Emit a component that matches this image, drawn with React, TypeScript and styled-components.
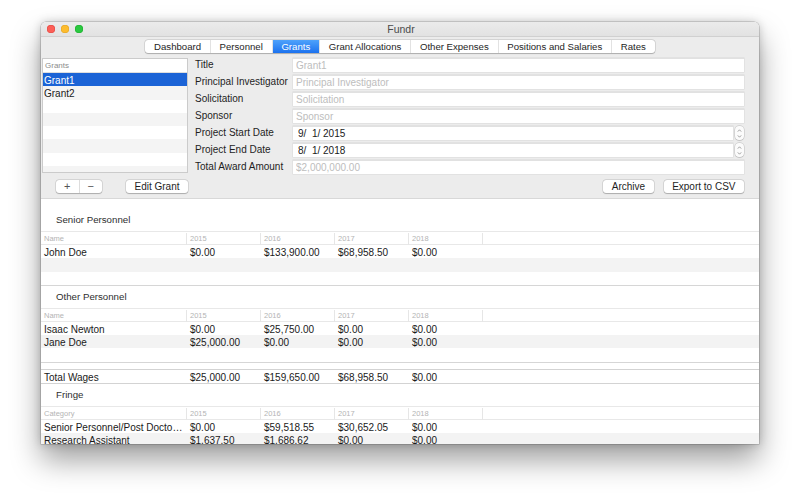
import styled, { createGlobalStyle } from 'styled-components';

// Глобальные стили страницы
const GlobalStyle = createGlobalStyle`
  html, body {
    margin: 0;
    padding: 0;
    background: #ffffff;
  }
  body {
    font-family: 'Liberation Sans', Arial, sans-serif;
  }
  * {
    box-sizing: border-box;
  }
`;

interface Field {
  label: string;
  placeholder?: string;
  value?: string;
  stepper?: boolean;
}

interface Line {
  name: string;
  values: string[];
}

const tabs = ['Dashboard', 'Personnel', 'Grants', 'Grant Allocations', 'Other Expenses', 'Positions and Salaries', 'Rates'];
const years = ['2015', '2016', '2017', '2018'];

const fields: Field[] = [
  { label: 'Title', placeholder: 'Grant1' },
  { label: 'Principal Investigator', placeholder: 'Principal Investigator' },
  { label: 'Solicitation', placeholder: 'Solicitation' },
  { label: 'Sponsor', placeholder: 'Sponsor' },
  { label: 'Project Start Date', value: '9/  1/ 2015', stepper: true },
  { label: 'Project End Date', value: '8/  1/ 2018', stepper: true },
  { label: 'Total Award Amount', placeholder: '$2,000,000.00' },
];

const senior: Line[] = [
  { name: 'John Doe', values: ['$0.00', '$133,900.00', '$68,958.50', '$0.00'] },
];
const other: Line[] = [
  { name: 'Isaac Newton', values: ['$0.00', '$25,750.00', '$0.00', '$0.00'] },
  { name: 'Jane Doe', values: ['$25,000.00', '$0.00', '$0.00', '$0.00'] },
];
const totalWages: Line = { name: 'Total Wages', values: ['$25,000.00', '$159,650.00', '$68,958.50', '$0.00'] };
const fringe: Line[] = [
  { name: 'Senior Personnel/Post Doctoral Associates', values: ['$0.00', '$59,518.55', '$30,652.05', '$0.00'] },
  { name: 'Research Assistant', values: ['$1,637.50', '$1,686.62', '$0.00', '$0.00'] },
];

// Таблица с заголовком по годам
function MoneyTable({ first, lines, minRows }: { first: string; lines: Line[]; minRows: number }) {
  const rows: (Line | null)[] = [...lines];
  while (rows.length < minRows) rows.push(null);
  return (
    <div>
      <HeadRow>
        <HeadCell>{first}</HeadCell>
        {years.map(y => <HeadCell key={y}>{y}</HeadCell>)}
        <HeadCell $last />
      </HeadRow>
      {rows.map((line, i) => (
        <DataRow key={i} $odd={i % 2 === 1}>
          <Cell>{line?.name}</Cell>
          {years.map((y, j) => <Cell key={y}>{line?.values[j]}</Cell>)}
          <Cell />
        </DataRow>
      ))}
    </div>
  );
}

function Stepper() {
  return (
    <StepperBox>
      <svg width="5" height="11" viewBox="0 0 5 11">
        <polyline points="0.8,3.6 2.5,1.8 4.2,3.6" fill="none" stroke="#8a8a8a" strokeWidth="0.8" />
        <polyline points="0.8,7.4 2.5,9.2 4.2,7.4" fill="none" stroke="#8a8a8a" strokeWidth="0.8" />
      </svg>
    </StepperBox>
  );
}

export default function App() {
  const grants = ['Grant1', 'Grant2', '', '', '', '', '', ''];
  return (
    <Page>
      <GlobalStyle />
      <Window>
        <TitleBar>
          <Lights>
            <Light $color="#fc5f57" $edge="#e0443e" />
            <Light $color="#fdbc2e" $edge="#dea123" />
            <Light $color="#2ac840" $edge="#1aab29" />
          </Lights>
          <WindowTitle>Fundr</WindowTitle>
          <span />
        </TitleBar>

        <TopPane>
          <TabRow>
            <TabStrip>
              {tabs.map(t => <Tab key={t} $active={t === 'Grants'}>{t}</Tab>)}
            </TabStrip>
          </TabRow>

          <MainRow>
            <GrantList>
              <ListHeader>Grants</ListHeader>
              {grants.map((g, i) => (
                <ListRow key={i} $odd={i % 2 === 1} $selected={i === 0}>{g}</ListRow>
              ))}
            </GrantList>

            <Form>
              {fields.map(f => (
                <FormRow key={f.label}>
                  <Label>{f.label}</Label>
                  <FieldWrap>
                    <TextField
                      readOnly
                      placeholder={f.placeholder}
                      defaultValue={f.value}
                      $date={!!f.stepper}
                    />
                    {f.stepper && <Stepper />}
                  </FieldWrap>
                </FormRow>
              ))}
            </Form>
          </MainRow>

          <ButtonRow>
            <Group>
              <Segmented>
                <SegButton>+</SegButton>
                <SegButton>−</SegButton>
              </Segmented>
              <Button>Edit Grant</Button>
            </Group>
            <Group $gap={10}>
              <Button>Archive</Button>
              <Button>Export to CSV</Button>
            </Group>
          </ButtonRow>
        </TopPane>

        <BottomPane>
          <Section $first>
            <SectionTitle>Senior Personnel</SectionTitle>
            <MoneyTable first="Name" lines={senior} minRows={3} />
          </Section>
          <Section>
            <SectionTitle>Other Personnel</SectionTitle>
            <MoneyTable first="Name" lines={other} minRows={3} />
          </Section>
          <TotalBox>
            <DataRow $odd={false}>
              <Cell>{totalWages.name}</Cell>
              {totalWages.values.map((v, i) => <Cell key={i}>{v}</Cell>)}
              <Cell />
            </DataRow>
          </TotalBox>
          <Section>
            <SectionTitle>Fringe</SectionTitle>
            <MoneyTable first="Category" lines={fringe} minRows={3} />
          </Section>
        </BottomPane>
      </Window>
    </Page>
  );
}

// Страница с окном
const Page = styled.div`
  width: 800px;
  height: 500px;
  padding: 22px 41px 56px;
  background: #ffffff;
  overflow: hidden;
`;

const Window = styled.div`
  width: 718px;
  height: 422px;
  display: flex;
  flex-direction: column;
  border-radius: 5px 5px 0 0;
  overflow: hidden;
  background: #ffffff;
  box-shadow: 0 16px 30px rgba(0, 0, 0, 0.38), 0 0 10px rgba(0, 0, 0, 0.2), 0 0 0 0.5px rgba(0, 0, 0, 0.25);
`;

// Заголовок окна
const TitleBar = styled.div`
  height: 15px;
  flex: none;
  display: grid;
  grid-template-columns: 1fr auto 1fr;
  align-items: center;
  background: linear-gradient(#ebebeb, #e2e2e2);
  border-bottom: 0.5px solid #d0d0d0;
`;

const Lights = styled.div`
  display: flex;
  gap: 6.3px;
  padding-left: 5.7px;
`;

const Light = styled.span<{ $color: string; $edge: string }>`
  width: 8px;
  height: 8px;
  border-radius: 50%;
  background: ${p => p.$color};
  box-shadow: inset 0 0 0 0.5px ${p => p.$edge};
`;

const WindowTitle = styled.div`
  font-size: 10.5px;
  color: #4b4b4b;
  padding-left: 2px;
`;

// Верхняя серая панель
const TopPane = styled.div`
  flex: none;
  background: #ececec;
  padding: 3px 0 5px;
  border-bottom: 1px solid #d8d8d8;
`;

const TabRow = styled.div`
  display: flex;
  justify-content: center;
`;

const TabStrip = styled.div`
  display: flex;
  height: 13px;
  background: #ffffff;
  border-radius: 3px;
  box-shadow: 0 0 0 0.5px rgba(0, 0, 0, 0.16), 0 0.5px 1px rgba(0, 0, 0, 0.2);
  overflow: hidden;
`;

const Tab = styled.div<{ $active: boolean }>`
  padding: 0 8.8px;
  font-size: 9.6px;
  line-height: 13px;
  color: ${p => (p.$active ? '#ffffff' : '#1e1e1e')};
  background: ${p => (p.$active ? 'linear-gradient(#4ea2fb, #1c72ef)' : 'transparent')};
  & + & {
    border-left: 0.5px solid #e2e2e2;
  }
`;

const MainRow = styled.div`
  display: flex;
  gap: 7px;
  margin-top: 5px;
  padding: 0 15px 0 1px;
`;

// Список грантов
const GrantList = styled.div`
  width: 146px;
  height: 115px;
  flex: none;
  background: #ffffff;
  border: 1px solid #cbcbcb;
  overflow: hidden;
`;

const ListHeader = styled.div`
  height: 14px;
  padding-left: 2px;
  font-size: 8px;
  line-height: 13px;
  color: #8c8c8c;
  border-bottom: 1px solid #dedede;
`;

const ListRow = styled.div<{ $odd: boolean; $selected: boolean }>`
  height: 13.3px;
  padding: 1.5px 0 0 1px;
  font-size: 10px;
  line-height: 11.8px;
  color: ${p => (p.$selected ? '#ffffff' : '#1a1a1a')};
  background: ${p => (p.$selected ? '#1b63d6' : p.$odd ? '#f4f4f4' : '#ffffff')};
`;

// Форма с полями
const Form = styled.div`
  flex: 1;
  display: flex;
  flex-direction: column;
  gap: 3px;
`;

const FormRow = styled.div`
  display: grid;
  grid-template-columns: 98px 1fr;
  height: 14px;
  align-items: center;
`;

const Label = styled.div`
  font-size: 10px;
  line-height: 12px;
  color: #1e1e1e;
  margin-top: -1px;
`;

const FieldWrap = styled.div`
  display: flex;
  gap: 2px;
  height: 14px;
`;

const TextField = styled.input<{ $date: boolean }>`
  flex: 1;
  min-width: 0;
  height: 14px;
  border: none;
  outline: none;
  margin: 0;
  padding: 1px 0 0 ${p => (p.$date ? 5 : 3)}px;
  font-family: 'Liberation Sans', Arial, sans-serif;
  font-size: 10px;
  color: #1a1a1a;
  background: #ffffff;
  box-shadow: inset 0 0.5px 0 #c4c4c4, 0 0 0 0.5px #d7d7d7;
  &::placeholder {
    color: #bdbdbd;
  }
`;

const StepperBox = styled.div`
  width: 9px;
  height: 14px;
  flex: none;
  display: flex;
  align-items: center;
  justify-content: center;
  background: #fbfbfb;
  border-radius: 4px;
  box-shadow: 0 0 0 0.5px rgba(0, 0, 0, 0.18), 0 0.5px 1px rgba(0, 0, 0, 0.15);
`;

// Кнопки под списком
const ButtonRow = styled.div`
  display: flex;
  justify-content: space-between;
  margin-top: 6px;
  padding: 0 15px;
`;

const Group = styled.div<{ $gap?: number }>`
  display: flex;
  gap: ${p => p.$gap ?? 24}px;
`;

const Button = styled.div`
  height: 13px;
  padding: 0 8.5px;
  font-size: 10px;
  line-height: 13px;
  color: #1e1e1e;
  background: #ffffff;
  border-radius: 3px;
  box-shadow: 0 0 0 0.5px rgba(0, 0, 0, 0.17), 0 0.5px 1px rgba(0, 0, 0, 0.2);
`;

const Segmented = styled.div`
  display: flex;
  width: 46px;
  height: 13px;
  background: #ffffff;
  border-radius: 3px;
  box-shadow: 0 0 0 0.5px rgba(0, 0, 0, 0.17), 0 0.5px 1px rgba(0, 0, 0, 0.2);
`;

const SegButton = styled.div`
  flex: 1;
  text-align: center;
  font-size: 11px;
  line-height: 13px;
  color: #555555;
  & + & {
    border-left: 0.5px solid #dddddd;
  }
`;

// Нижняя белая панель с таблицами
const BottomPane = styled.div`
  flex: 1;
  overflow: hidden;
  background: #ffffff;
`;

const Section = styled.div<{ $first?: boolean }>`
  padding-top: ${p => (p.$first ? 10 : 0)}px;
  border-bottom: 1px solid #d6d6d6;
`;

const SectionTitle = styled.div`
  height: 22px;
  padding-left: 15px;
  font-size: 9.7px;
  line-height: 22px;
  color: #2e2e2e;
`;

const TotalBox = styled.div`
  margin-top: 6px;
  border-top: 1px solid #d3d3d3;
  border-bottom: 1px solid #d3d3d3;
`;

const grid = `
  display: grid;
  grid-template-columns: 146px repeat(4, 74px) 1fr;
`;

const HeadRow = styled.div`
  ${grid}
  height: 14px;
  border-top: 1px solid #e8e8e8;
  border-bottom: 1px solid #e8e8e8;
`;

const HeadCell = styled.div<{ $last?: boolean }>`
  padding-left: 3px;
  font-size: 7.5px;
  line-height: 12px;
  color: #b4b4b4;
  border-right: ${p => (p.$last ? 'none' : '1px solid #e6e6e6')};
  margin: 1px 0;
`;

const DataRow = styled.div<{ $odd: boolean }>`
  ${grid}
  height: 13.3px;
  background: ${p => (p.$odd ? '#f3f3f3' : '#ffffff')};
`;

const Cell = styled.div`
  padding: 2px 2px 0 3px;
  font-size: 10px;
  line-height: 11.3px;
  color: #1a1a1a;
  white-space: nowrap;
  overflow: hidden;
  text-overflow: ellipsis;
`;
